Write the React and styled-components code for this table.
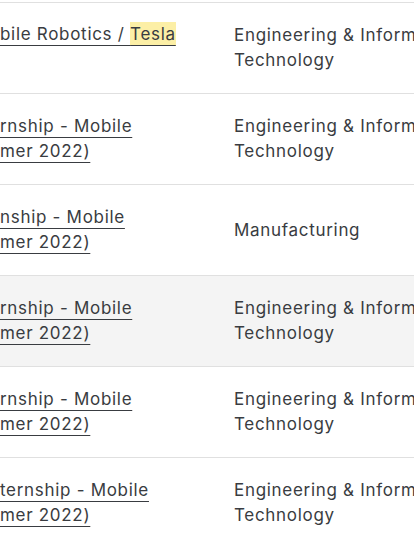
import React from "react";
import styled, { createGlobalStyle } from "styled-components";

const jobs = [
	{ title: ["bile Robotics / "], mark: "Tesla", dept: "Engineering & Information Technology", top: true },
	{ title: ["rnship - Mobile", "mer 2022)"], dept: "Engineering & Information Technology" },
	{ title: ["nship - Mobile", "mer 2022)"], dept: "Manufacturing" },
	{ title: ["rnship - Mobile", "mer 2022)"], dept: "Engineering & Information Technology", hover: true },
	{ title: ["rnship - Mobile", "mer 2022)"], dept: "Engineering & Information Technology" },
	{ title: ["ternship - Mobile", "mer 2022)"], dept: "Engineering & Information Technology" },
];

export default function App() {
	return (
		<>
			<GlobalStyle />
			<Table>
				{jobs.map((job, i) => (
					<Row key={i} $hover={job.hover}>
						<TitleCell $top={job.top}>
							<JobLink href="#">
								{job.title.map((line, j) => (
									<React.Fragment key={j}>
										{j > 0 && <br />}
										{line}
									</React.Fragment>
								))}
								{job.mark && <Mark>{job.mark}</Mark>}
							</JobLink>
						</TitleCell>
						<DeptCell>{job.dept}</DeptCell>
					</Row>
				))}
			</Table>
		</>
	);
}

// styled components
const GlobalStyle = createGlobalStyle`
	body {
		margin: 0;
		background: #ffffff;
		overflow: hidden;
		font-family: Inter, "Noto Sans", sans-serif;
		color: #393c41;
	}
`;

const Table = styled.div`
	width: 414px;
	overflow: hidden;
	padding-top: 2px;
`;

const Row = styled.div`
	display: grid;
	grid-template-columns: 234px 310px;
	align-items: center;
	height: 90px;
	border-top: 1px solid #e0e0e0;
	background: ${(p) => (p.$hover ? "#f4f4f4" : "#ffffff")};
`;

const TitleCell = styled.div`
	font-size: 17px;
	line-height: 25px;
	letter-spacing: 0.7px;
	align-self: ${(p) => (p.$top ? "start" : "center")};
	padding-top: ${(p) => (p.$top ? "19px" : "0")};
	white-space: nowrap;
`;

const JobLink = styled.a`
	color: #393c41;
	text-decoration: underline;
	text-decoration-thickness: 1px;
	text-underline-offset: 5px;
`;

const Mark = styled.mark`
	background: #fcefa6;
	color: #393c41;
	padding: 2px 0;
`;

const DeptCell = styled.div`
	font-size: 17px;
	line-height: 25px;
	letter-spacing: 0.7px;
	width: 310px;
`;
